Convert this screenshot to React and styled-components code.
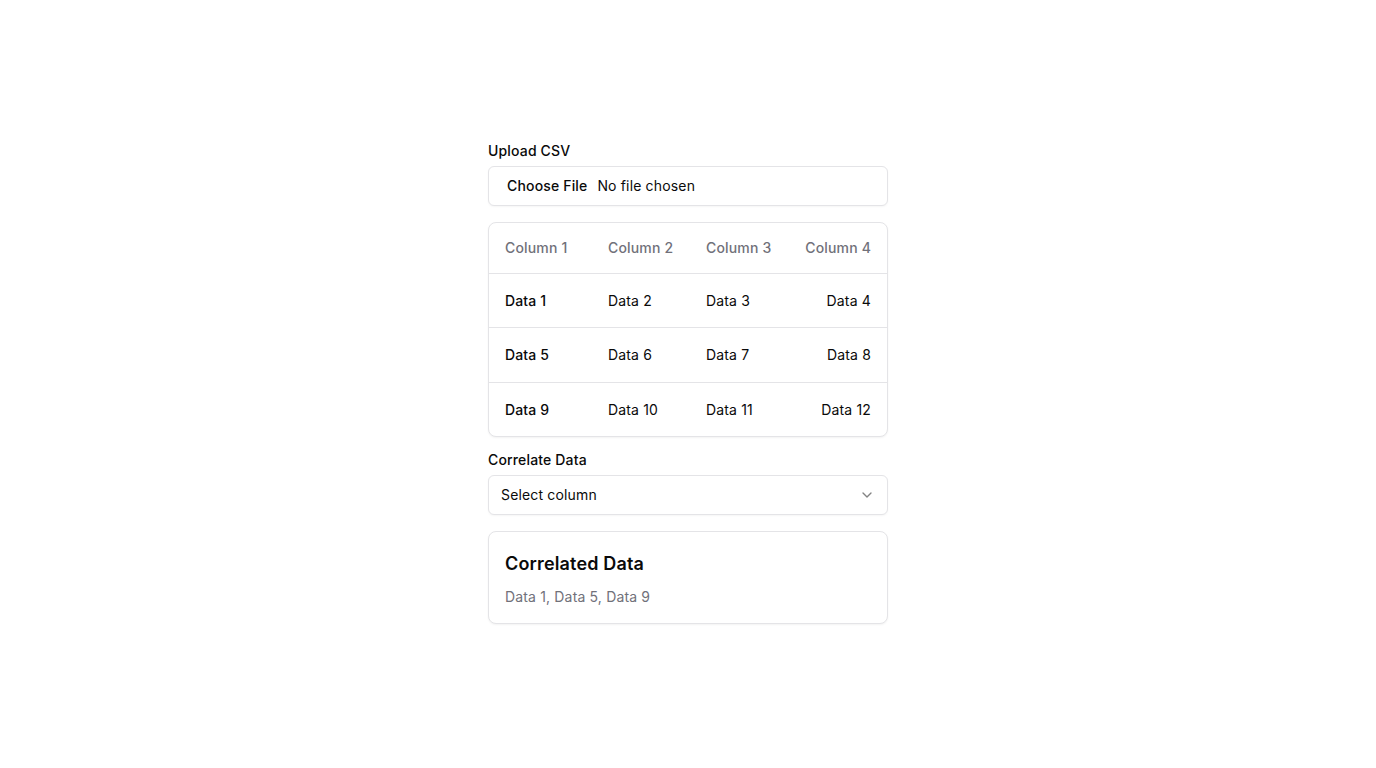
import React from "react";
import styled, { createGlobalStyle } from "styled-components";
import { ChevronDown } from "lucide-react";

const Global = createGlobalStyle`
  * { box-sizing: border-box; }
  html, body { margin: 0; padding: 0; background: #ffffff; }
  body {
    font-family: Inter, "Noto Sans", "Liberation Sans", sans-serif;
    color: #0a0a0a;
    letter-spacing: 0.01em;
    -webkit-font-smoothing: antialiased;
  }
`;

const Page = styled.main`
  min-height: 100vh;
  display: flex;
  align-items: center;
  justify-content: center;
`;

const Stack = styled.div`
  width: 400px;
  display: flex;
  flex-direction: column;
  gap: 16px;
`;

const Field = styled.div`
  display: flex;
  flex-direction: column;
  gap: 8px;
`;

const Label = styled.label`
  font-size: 14px;
  line-height: 14px;
  font-weight: 500;
  color: #0a0a0a;
`;

const Control = styled.div`
  height: 40px;
  width: 100%;
  display: flex;
  align-items: center;
  justify-content: ${(p) => (p.$between ? "space-between" : "flex-start")};
  padding: 0 12px;
  border: 1px solid #e4e4e7;
  border-radius: 6px;
  background: #fff;
  box-shadow: 0 1px 2px rgba(0, 0, 0, 0.04);
  font-size: 14px;
  line-height: 20px;
  color: #0a0a0a;
`;

const FileButton = styled.span`
  font-weight: 500;
  padding: 0 6px;
  margin-right: 4px;
`;

const Card = styled.div`
  border: 1px solid #e4e4e7;
  border-radius: 8px;
  background: #fff;
  box-shadow: 0 1px 2px rgba(0, 0, 0, 0.05);
  overflow: hidden;
`;

const Table = styled.table`
  width: 100%;
  border-collapse: collapse;
  table-layout: fixed;
  font-size: 14px;
`;

const Row = styled.tr`
  border-bottom: ${(p) => (p.$last ? "none" : "1px solid #e4e4e7")};
`;

const Head = styled.th`
  width: ${(p) => (p.$w ? `${p.$w}px` : "auto")};
  height: 50px;
  padding: 0 16px;
  text-align: ${(p) => (p.$right ? "right" : "left")};
  font-weight: 500;
  color: #71717a;
  line-height: 20px;
  vertical-align: middle;
  white-space: nowrap;
`;

const Cell = styled.td`
  padding: 16px;
  line-height: 21.5px;
  text-align: ${(p) => (p.$right ? "right" : "left")};
  font-weight: ${(p) => (p.$strong ? 500 : 400)};
  color: #0a0a0a;
  white-space: nowrap;
`;

const Chevron = styled(ChevronDown)`
  width: 16px;
  height: 16px;
  opacity: 0.5;
`;

const ResultCard = styled(Card)`
  padding: 18px 16px 16px;
`;

const Title = styled.h3`
  margin: 0 0 9px;
  font-size: 18px;
  line-height: 28px;
  font-weight: 600;
`;

const Muted = styled.p`
  margin: 0;
  font-size: 14px;
  line-height: 20px;
  color: #71717a;
`;

const rows = [
  ["Data 1", "Data 2", "Data 3", "Data 4"],
  ["Data 5", "Data 6", "Data 7", "Data 8"],
  ["Data 9", "Data 10", "Data 11", "Data 12"],
];

export default function App() {
  return (
    <>
      <Global />
      <Page>
        <Stack>
          <Field>
            <Label>Upload CSV</Label>
            <Control>
              <FileButton>Choose File</FileButton>
              <span>No file chosen</span>
            </Control>
          </Field>
          <Card>
            <Table>
              <thead>
                <Row>
                  <Head $w={103}>Column 1</Head>
                  <Head $w={98}>Column 2</Head>
                  <Head $w={98}>Column 3</Head>
                  <Head $right>Column 4</Head>
                </Row>
              </thead>
              <tbody>
                {rows.map((r, i) => (
                  <Row key={i} $last={i === rows.length - 1}>
                    {r.map((c, j) => (
                      <Cell key={j} $strong={j === 0} $right={j === 3}>
                        {c}
                      </Cell>
                    ))}
                  </Row>
                ))}
              </tbody>
            </Table>
          </Card>
          <Field>
            <Label>Correlate Data</Label>
            <Control $between>
              <span>Select column</span>
              <Chevron />
            </Control>
          </Field>
          <ResultCard>
            <Title>Correlated Data</Title>
            <Muted>Data 1, Data 5, Data 9</Muted>
          </ResultCard>
        </Stack>
      </Page>
    </>
  );
}
